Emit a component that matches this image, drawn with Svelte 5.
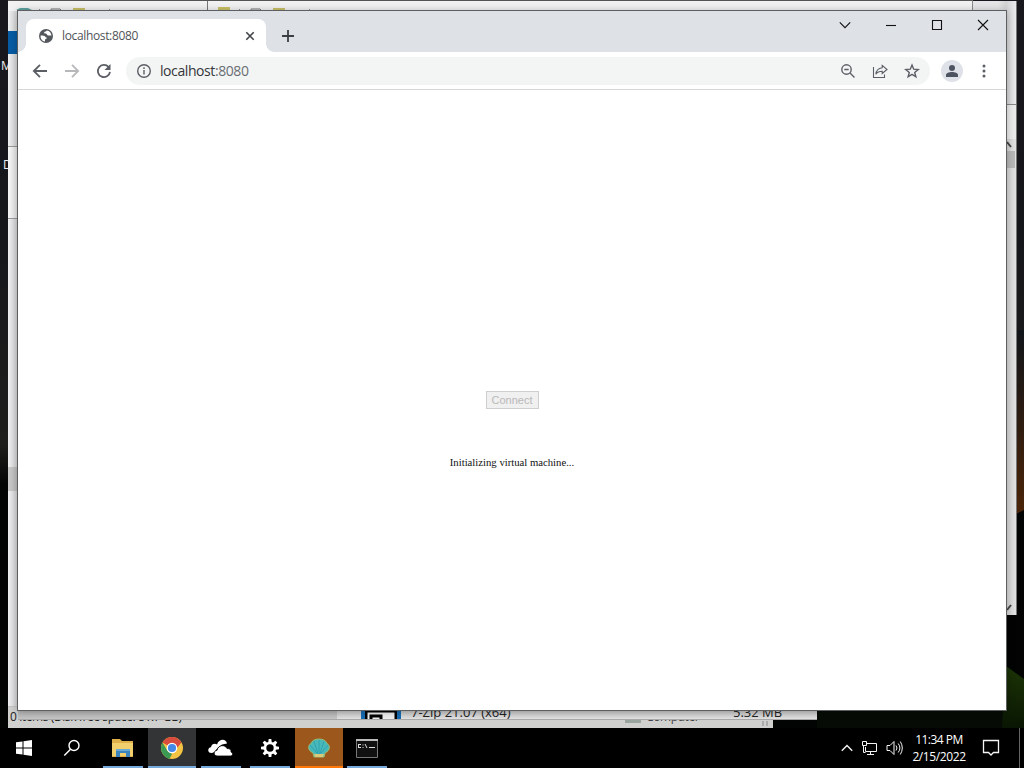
<script>
    let address = 'localhost:8080';
    let status = 'Initializing virtual machine...';
    let time = '11:34 PM';
    let date = '2/15/2022';
    let rays = [0, 45, 90, 135, 180, 225, 270, 315];
</script>

<div class="desktop">
    <svg class="wallpaper" width="1024" height="768">
        <defs>
            <linearGradient id="night" x1="0" y1="0" x2="0" y2="1">
                <stop offset="0" stop-color="#17171d" />
                <stop offset="0.3" stop-color="#15161a" />
                <stop offset="0.58" stop-color="#1e1e1c" />
                <stop offset="0.63" stop-color="#020303" />
                <stop offset="1" stop-color="#020402" />
            </linearGradient>
            <linearGradient id="dusk" x1="0" y1="0" x2="0" y2="1">
                <stop offset="0" stop-color="#11151a" />
                <stop offset="1" stop-color="#4b2408" />
            </linearGradient>
            <linearGradient id="grass" x1="0" y1="0" x2="0" y2="1">
                <stop offset="0" stop-color="#1c3507" />
                <stop offset="1" stop-color="#091603" />
            </linearGradient>
        </defs>
        <rect width="1024" height="768" fill="url(#night)" />
        <path d="M1016 330h8v180l-8 4z" fill="url(#dusk)" />
        <path d="M817 711h190v17H817z" fill="#060c05" />
        <path d="M1006 666l18 13v49h-22z" fill="url(#grass)" />
    </svg>
    <span class="shortcut shortcut--top">M</span>
    <span class="shortcut shortcut--mid">D</span>

    <div class="window explorer">
        <div class="explorer__ribbon"></div>
        <div class="explorer__address"></div>
        <div class="explorer__list"></div>
        <div class="explorer__status">
            <span>0 items (Disk free space: 81.7 GB)</span>
            <span class="explorer__place"><i></i>Computer</span>
            <b></b>
        </div>
    </div>
    <div class="window folder">
        <div class="folder__head"></div>
        <div class="folder__bar"></div>
        <div class="folder__scroll">
            <svg width="8" height="12"><path d="M0 3l4 5" stroke="#444" stroke-width="2" /></svg>
            <i></i>
            <svg class="folder__down" width="8" height="12"><path d="M0 7l4-5" stroke="#444" stroke-width="2" /></svg>
        </div>
    </div>
    <div class="window caption"></div>
    <svg class="quick" width="320" height="11">
        <path d="M16 10l4-2h8l4 2z" fill="#5fa3a2" />
        <path d="M51 11V9h9l2 2M251 11V9h9l2 2" fill="none" stroke="#777" />
        <path d="M73 8h12v3H73zM218 7h12v4h-12zM273 8h12v3h-12z" fill="#c9c067" />
        <path d="M39 10h1M109 10h1M239 10h1M309 10h1" stroke="#333" />
        <path d="M207.5 1v10" stroke="#777" />
    </svg>
    <div class="window apps">
        <div class="apps__nav"></div>
        <div class="apps__icon">
            <svg width="32" height="9"><path d="M1 9V1h30v8" fill="#eee" stroke="#000" stroke-width="3" /><path d="M6 9V6h10v3" fill="none" stroke="#000" stroke-width="3" /></svg>
        </div>
        <span class="apps__name">7-Zip 21.07 (x64)</span>
        <span class="apps__size">5.32 MB</span>
    </div>

    <div class="browser">
        <div class="tabs">
            <div class="tab">
                <svg width="16" height="16" viewBox="0 0 16 16">
                    <circle cx="8" cy="8" r="7" fill="#54575c" />
                    <path d="M2.600 7.500c2 .2 4.200-.1 4.700 1.300.3 1 1.500.3 1.600 1.200 0 .9-1.800.8-1.900 1.800v1.700C4 13.200 2.300 10.700 2.600 7.500zM8.700 2.400c-.3 1.500-2 .8-2.500 1.900-.4 1 .6 1.300 1.500 1.300 1.500.1 1 1.700 2.300 1.900 1.200.2 2.100-.3 3.400.3C13.500 5 11.700 2.700 8.700 2.400z" fill="#fff" />
                </svg>
                <span class="tab__title">{address}</span>
                <svg width="10" height="10"><path d="M1.300 1.300l7.400 7.400M8.700 1.300L1.300 8.700" stroke="#404347" stroke-width="1.600" /></svg>
            </div>
            <svg class="tabs__new" width="14" height="14"><path d="M7 1v12M1 7h12" stroke="#3b3e43" stroke-width="1.800" /></svg>
            <div class="controls">
                <svg width="12" height="12"><path d="M.8 3.300L6 8.700l5.200-5.400" /></svg>
                <svg width="12" height="12"><path d="M1 6.500h10" /></svg>
                <svg width="12" height="12"><path d="M1.500 1.500h9v9h-9z" /></svg>
                <svg width="12" height="12"><path d="M1 1l10 10M11 1L1 11" /></svg>
            </div>
        </div>
        <div class="toolbar">
            <div class="nav">
                <svg width="16" height="16"><path d="M15 8H2M8 1.800L1.800 8 8 14.200" /></svg>
                <svg class="nav__off" width="16" height="16"><path d="M1 8h13M8 1.800L14.200 8 8 14.200" /></svg>
                <svg width="16" height="16"><path d="M14 8.800A6.100 6.100 0 1 1 12.600 4" /><path d="M14.500 1v6H8.500z" /></svg>
            </div>
            <div class="omnibox">
                <svg width="16" height="16"><circle cx="8" cy="8" r="6.300" /><path d="M8 7v4.500M8 4.200v1.700" /></svg>
                <span class="omnibox__url">localhost<em>:8080</em></span>
                <svg width="16" height="16"><circle cx="6.500" cy="6.500" r="4.700" /><path d="M10 10l4.500 4.500M4.300 6.500h4.400" /></svg>
                <svg class="omnibox__share" width="16" height="16"><path d="M1.500 4v10.500h11v-3" /><path d="M10.200 2.400L15 6.500l-4.800 4V8.200C7 8.200 5.300 9 3.900 11.200c.3-3.800 2.600-6 6.300-6.500z" /></svg>
                <svg width="16" height="16"><path d="M8 2l1.700 4.200 4.500.3-3.500 2.900 1.200 4.400L8 11.400l-3.900 2.400 1.200-4.400-3.500-2.900 4.500-.3z" /></svg>
            </div>
            <div class="avatar">
                <svg width="14" height="14"><circle cx="7" cy="4" r="3" /><path d="M1 13v-2c0-4 12-4 12 0v2z" /></svg>
            </div>
            <svg class="menu" width="6" height="14"><circle cx="3" cy="2" r="1.500" /><circle cx="3" cy="7" r="1.500" /><circle cx="3" cy="12" r="1.500" /></svg>
        </div>
        <div class="page">
            <button class="connect" disabled>Connect</button>
            <p class="status">{status}</p>
        </div>
    </div>

    <div class="taskbar">
        <div class="task">
            <svg width="16" height="16"><path d="M0 2.300L6.500 1.400v6.100H0zM7.500 1.200L16 0v7.500H7.500zM0 8.500h6.500v6.100L0 13.700zM7.500 8.500H16V16l-8.500-1.200z" fill="#fff" /></svg>
        </div>
        <div class="task">
            <svg width="18" height="18"><circle cx="11" cy="6.500" r="5" fill="none" stroke="#fff" stroke-width="1.400" /><path d="M7.500 10.200L1.300 16.500" stroke="#fff" stroke-width="1.500" /></svg>
        </div>
        <div class="task task--open">
            <svg width="22" height="20"><path d="M0 1h8l2 2h11v16H0z" fill="#dfb04a" /><path d="M0 5h21v13H0z" fill="#f2cf6d" /><path d="M4 19v-8h14v8h-4v-4H8v4z" fill="#3c84bd" /><path d="M4 11h14v2H4z" fill="#68a9d5" /></svg>
        </div>
        <div class="task task--open task--active">
            <svg width="24" height="24">
                <circle cx="12" cy="12" r="11" fill="#f3c443" />
                <path d="M12 12L2.500 6.500a11 11 0 0 1 19 0z" fill="#d84c3d" />
                <path d="M2.500 6.500L7.500 15l4.500 3-2.500 4.700A11 11 0 0 1 2.500 6.500z" fill="#3b9b55" />
                <path d="M12 6.500h9.500L17 12z" fill="#d84c3d" />
                <circle cx="12" cy="12" r="5.300" fill="#fff" />
                <circle cx="12" cy="12" r="4.100" fill="#4488e8" />
            </svg>
        </div>
        <div class="task task--open">
            <svg width="26" height="18"><path d="M4 14H3.500C-1 14-.500 8.500 3 8.200 3.400 5 7 4 9 5.500 11-.500 18-.500 19 4.500L14 5.500 9.500 9 6.500 13z" fill="#fff" /><path d="M9 17c-4-.500-3.500-5.500 0-5.700C10 6 17 5 19 9.500c3-.2 4.500 1.500 4 3.500 2.500 1 1.800 4-.5 4z" fill="#fff" stroke="#000" stroke-width=".8" /></svg>
        </div>
        <div class="task task--open">
            <svg width="20" height="20">
                {#each rays as angle}
                    <path d="M8.200 4.500l.5-3.500h2.600l.5 3.500z" fill="#fff" transform="rotate({angle} 10 10)" />
                {/each}
                <circle cx="10" cy="10" r="5" fill="none" stroke="#fff" stroke-width="2.600" />
            </svg>
        </div>
        <div class="task task--open task--alert">
            <svg width="22" height="20">
                <path d="M5 15C-1 12 0 7 3 5.500 4 2.500 7 1 11 1s7 1.500 8 4.500c3 1.500 4 6.500-2 9.500l-1 4H6z" fill="#48b9b8" stroke="#9ab974" />
                <path d="M11 16V2M10 16L6 3M12 16l4-13M9 15L2 7M13 15l7-8" stroke="#2a9cb2" stroke-width=".8" />
                <path d="M6 16h10l-1 3H7z" fill="#d9c979" />
            </svg>
        </div>
        <div class="task task--open">
            <svg width="22" height="19"><path d="M.5.5h21v18H.5z" fill="#111" stroke="#777" /><path d="M0 0h22v2H0z" fill="#bbb" /><path d="M3 5.500h2M2.500 5v4M3 8.500h2M7 5.500v1M7 8v1M9 5l2 4M13 8.500h6" stroke="#ddd" fill="none" /></svg>
        </div>
        <div class="tray">
            <svg width="12" height="12"><path d="M.8 8.700L6 3.500l5.200 5.200" stroke-width="1.400" /></svg>
            <svg width="17" height="16"><path d="M5 3.500h10.500v8H4.500V7M9.500 12v2.500M6 14.500h7" /><path d="M1.500 1.500h4v4h-4zM2.500 5.500v7h2" /></svg>
            <svg width="17" height="16"><path d="M1 5.500h3l4-4v13l-4-4H1z" /><path d="M10 5.500q2 2.500 0 5M12.200 3.500q3.400 4.500 0 9M14.300 1.500q4 6.500 0 13" /></svg>
            <div class="clock">
                <span>{time}</span>
                <span class="clock__date">{date}</span>
            </div>
            <svg width="18" height="18"><path d="M1.500 1.500h15v12h-5L9 16l-2.500-2.500h-5z" stroke-width="1.300" /></svg>
            <div class="peek"></div>
        </div>
    </div>
</div>

<style>
    .desktop {
        position: relative;
        width: 1024px;
        height: 768px;
        overflow: hidden;
        background: #000;
        font-family: "Open Sans", "Noto Sans", sans-serif;
    }

    svg {
        display: block;
        flex: none;
    }

    .wallpaper {
        position: absolute;
        inset: 0;
    }

    .shortcut {
        position: absolute;
        color: #eee;
        font-size: 12px;
        line-height: 14px;
    }

    .shortcut--top {
        left: 1px;
        top: 59px;
    }

    .shortcut--mid {
        left: 3px;
        top: 158px;
    }

    .window {
        position: absolute;
        overflow: hidden;
        box-sizing: border-box;
    }

    .explorer {
        left: 8px;
        top: 1px;
        width: 765px;
        height: 727px;
        display: flex;
        flex-direction: column;
        background: linear-gradient(90deg, #eeeff0, #d2d2d3 10px);
    }

    .explorer__ribbon {
        height: 23px;
        margin-top: 30px;
        background: #075ca4;
    }

    .explorer__address {
        height: 165px;
        box-sizing: border-box;
        border-bottom: 1px solid #999;
        background: linear-gradient(#0000 92px, #999 92px, #999 93px, #fff6 93px);
    }

    .explorer__list {
        flex: 1;
        background: linear-gradient(#0000 248px, #aaa8 248px, #aaa8 272px, #0000 272px);
    }

    .explorer__status {
        position: relative;
        height: 22px;
        box-sizing: border-box;
        padding-left: 2px;
        border-top: 1px solid #c5c5c5;
        background: #d0d0cf;
        color: #222;
        font-size: 12px;
        line-height: 19px;
        letter-spacing: -0.4px;
    }

    .explorer__place {
        position: absolute;
        left: 614px;
        top: 0;
        padding-left: 24px;
        color: #444;
    }

    .explorer__place i {
        position: absolute;
        left: 3px;
        top: 13px;
        width: 16px;
        height: 3px;
        background: #9aa5a0;
    }

    .explorer__status b {
        position: absolute;
        right: 3px;
        bottom: 2px;
        width: 8px;
        height: 5px;
        background: repeating-linear-gradient(90deg, #aaa 0 2px, #d0d0cf 2px 4px);
    }

    .folder {
        left: 208px;
        top: 1px;
        width: 809px;
        height: 614px;
        display: flex;
        flex-direction: column;
        border-right: 1px solid #777;
        background: linear-gradient(90deg, #d3d3d3 798px, #e3e3e3);
    }

    .folder__head {
        height: 103px;
        border-bottom: 1px solid #888;
        background: linear-gradient(90deg, #e6e6e8 790px, #d2d2d4 798px, #ebebed);
    }

    .folder__bar {
        height: 34px;
        background: #ececed;
    }

    .folder__scroll {
        flex: 1;
        display: flex;
        flex-direction: column;
        padding-left: 799px;
    }

    .folder__scroll i {
        width: 8px;
        height: 17px;
        background: #b8b8b8;
    }

    .folder__down {
        margin-top: auto;
    }

    .caption {
        left: 8px;
        top: 0;
        width: 965px;
        height: 11px;
        border-top: 1px solid #555;
        border-right: 1px solid #888;
        background: #f2f2f3;
    }

    .quick {
        position: absolute;
        left: 0;
        top: 0;
    }

    .apps {
        left: 18px;
        top: 690px;
        width: 799px;
        height: 30px;
        border-bottom: 1px solid #aaa;
        background: linear-gradient(#c4c4c4 20px, #e2e2e2);
        color: #222;
        font-size: 13px;
        line-height: 16px;
    }

    .apps__nav {
        width: 319px;
        height: 30px;
        background: linear-gradient(#b2b2b2 20px, #c8c8c8);
    }

    .apps__icon {
        position: absolute;
        left: 343px;
        top: 20px;
        width: 40px;
        height: 9px;
        display: flex;
        justify-content: center;
        background: #176bb1;
    }

    .apps__name,
    .apps__size {
        position: absolute;
        left: 393px;
        top: 14px;
    }

    .apps__size {
        left: 715px;
    }

    .browser {
        position: absolute;
        left: 17px;
        top: 10px;
        width: 990px;
        height: 701px;
        box-sizing: border-box;
        display: flex;
        flex-direction: column;
        border: 1px solid #5e5f61;
        box-shadow: 0 1px 8px #0004;
        background: #fff;
    }

    .tabs {
        height: 41px;
        box-sizing: border-box;
        padding: 8px 17px 0 8px;
        display: flex;
        background: #dee1e6;
    }

    .tab {
        position: relative;
        width: 240px;
        box-sizing: border-box;
        padding: 0 11px 0 12px;
        display: flex;
        align-items: center;
        border-radius: 8px 8px 0 0;
        background: #fff;
        color: #505357;
        font-size: 12px;
    }

    .tab::before,
    .tab::after {
        content: '';
        position: absolute;
        bottom: 0;
        left: -8px;
        width: 8px;
        height: 8px;
        background: radial-gradient(circle at 0 0, #0000 7.500px, #fff 8px);
    }

    .tab::after {
        left: 240px;
        background: radial-gradient(circle at 100% 0, #0000 7.500px, #fff 8px);
    }

    .tab__title {
        flex: 1;
        margin-left: 8px;
        letter-spacing: -0.35px;
    }

    .tabs__new {
        margin: 10px 0 0 15px;
    }

    .controls {
        display: flex;
        gap: 34px;
        margin-left: auto;
    }

    .controls path {
        fill: none;
        stroke: #111;
        stroke-width: 1.1;
    }

    .toolbar {
        height: 38px;
        box-sizing: border-box;
        padding: 0 19px 0 14px;
        display: flex;
        align-items: center;
        border-bottom: 1px solid #d6d7d8;
    }

    .nav {
        display: flex;
        gap: 16px;
        margin-right: 14px;
    }

    .nav path,
    .omnibox path,
    .omnibox circle {
        fill: none;
        stroke: #5b5f65;
        stroke-width: 1.8;
    }

    .nav path:nth-child(2) {
        fill: #5b5f65;
        stroke: none;
    }

    .nav .nav__off path {
        stroke: #b6b8ba;
    }

    .omnibox {
        width: 804px;
        height: 28px;
        box-sizing: border-box;
        padding: 0 10px;
        display: flex;
        align-items: center;
        gap: 16px;
        border-radius: 14px;
        background: #f3f5f5;
    }

    .omnibox path,
    .omnibox circle {
        stroke-width: 1.4;
    }

    .omnibox .omnibox__share path {
        stroke-width: 1.1;
    }

    .omnibox__url {
        flex: 1;
        margin-left: -8px;
        color: #34363a;
        font-size: 14px;
        letter-spacing: -0.42px;
    }

    .omnibox__url em {
        color: #6a6e73;
        font-style: normal;
    }

    .avatar {
        width: 22px;
        height: 22px;
        margin-left: 11px;
        display: flex;
        align-items: center;
        justify-content: center;
        border-radius: 50%;
        background: #dee1e7;
        fill: #4d5361;
    }

    .menu {
        margin-left: auto;
        fill: #5b5f65;
    }

    .page {
        flex: 1;
        display: flex;
        flex-direction: column;
        align-items: center;
    }

    .connect {
        width: 53px;
        height: 18px;
        margin-top: 301px;
        padding: 0;
        border: 1px solid #cfcfcf;
        background: #f0f0f0;
        color: #b8b8b8;
        font: 11px/14px "Liberation Sans", Arial, sans-serif;
    }

    .status {
        margin: 46px 0 0;
        color: #111;
        font: 10.700px/14px "Liberation Serif", "Times New Roman", serif;
    }

    .taskbar {
        position: absolute;
        left: 0;
        bottom: 0;
        width: 1024px;
        height: 40px;
        display: flex;
        background: #000;
    }

    .task {
        position: relative;
        width: 48px;
        display: flex;
        align-items: center;
        justify-content: center;
    }

    .task--open {
        margin-left: 1px;
    }

    .task:nth-child(3) {
        margin-left: 3px;
    }

    .task:nth-child(8) {
        margin-left: 0;
    }

    .task--open::after {
        content: '';
        position: absolute;
        left: 4px;
        right: 4px;
        bottom: 0;
        height: 2px;
        background: #76a9dc;
    }

    .task--active {
        background: #333435;
    }

    .task--active::after {
        left: 0;
        right: 0;
    }

    .task--alert {
        background: #9c571d;
    }

    .task--alert::after {
        left: 0;
        right: 0;
        background: #ff7909;
    }

    .tray {
        flex: 1;
        display: flex;
        align-items: center;
        justify-content: flex-end;
        gap: 8px;
        color: #fff;
        font-size: 12px;
    }

    .tray path {
        fill: none;
        stroke: #f5f5f5;
    }

    .clock {
        width: 56px;
        margin: 0 7px 0 0;
        display: flex;
        flex-direction: column;
        align-items: center;
        line-height: 17.500px;
        letter-spacing: -0.5px;
        white-space: nowrap;
    }

    .clock__date {
        letter-spacing: -0.4px;
    }

    .peek {
        width: 5px;
        height: 40px;
        margin-left: 11px;
        box-sizing: border-box;
        border-left: 1px solid #666;
    }
</style>
